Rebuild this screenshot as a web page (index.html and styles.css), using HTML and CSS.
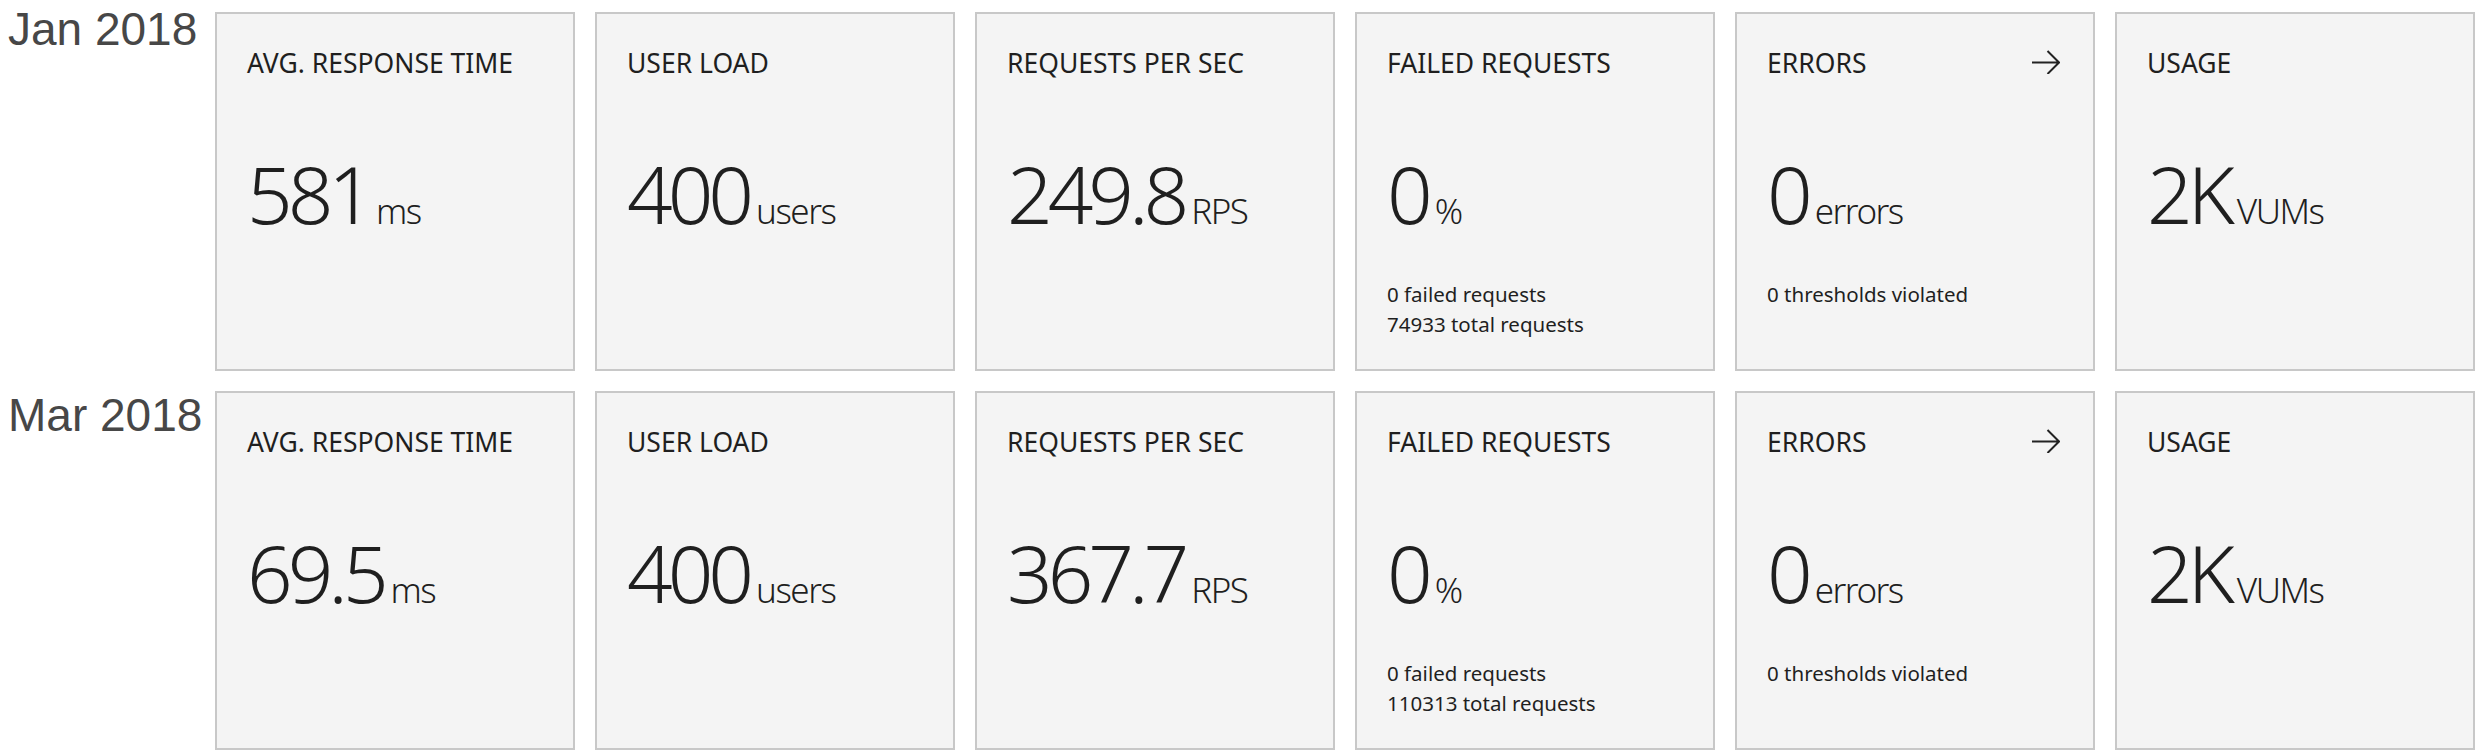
FILE: index.html
```html
<!DOCTYPE html>
<html>
<head>
<meta charset="utf-8">
<link rel="stylesheet" href="styles.css">
</head>
<body>
<div class="page">
  <section class="row">
    <div class="label label-first">Jan 2018</div>
    <div class="cards">
      <div class="card"><div class="head"><span class="title">AVG. RESPONSE TIME</span></div><div class="value"><span class="num">581</span><span class="unit">ms</span></div></div>
      <div class="card"><div class="head"><span class="title">USER LOAD</span></div><div class="value"><span class="num">400</span><span class="unit">users</span></div></div>
      <div class="card"><div class="head"><span class="title">REQUESTS PER SEC</span></div><div class="value"><span class="num">249.8</span><span class="unit">RPS</span></div></div>
      <div class="card"><div class="head"><span class="title">FAILED REQUESTS</span></div><div class="value"><span class="num">0</span><span class="unit">%</span></div><div class="sub"><div>0 failed requests</div><div>74933 total requests</div></div></div>
      <div class="card"><div class="head"><span class="title">ERRORS</span><svg class="arrow" width="28" height="24" viewBox="0 0 28 24"><path d="M0 12.5H27M15.5 1L27 12.5L15.5 24" fill="none" stroke="#222" stroke-width="2"/></svg></div><div class="value"><span class="num">0</span><span class="unit">errors</span></div><div class="sub"><div>0 thresholds violated</div></div></div>
      <div class="card"><div class="head"><span class="title">USAGE</span></div><div class="value"><span class="num">2K</span><span class="unit">VUMs</span></div></div>
    </div>
  </section>
  <section class="row">
    <div class="label label-second">Mar 2018</div>
    <div class="cards">
      <div class="card"><div class="head"><span class="title">AVG. RESPONSE TIME</span></div><div class="value"><span class="num">69.5</span><span class="unit">ms</span></div></div>
      <div class="card"><div class="head"><span class="title">USER LOAD</span></div><div class="value"><span class="num">400</span><span class="unit">users</span></div></div>
      <div class="card"><div class="head"><span class="title">REQUESTS PER SEC</span></div><div class="value"><span class="num">367.7</span><span class="unit">RPS</span></div></div>
      <div class="card"><div class="head"><span class="title">FAILED REQUESTS</span></div><div class="value"><span class="num">0</span><span class="unit">%</span></div><div class="sub"><div>0 failed requests</div><div>110313 total requests</div></div></div>
      <div class="card"><div class="head"><span class="title">ERRORS</span><svg class="arrow" width="28" height="24" viewBox="0 0 28 24"><path d="M0 12.5H27M15.5 1L27 12.5L15.5 24" fill="none" stroke="#222" stroke-width="2"/></svg></div><div class="value"><span class="num">0</span><span class="unit">errors</span></div><div class="sub"><div>0 thresholds violated</div></div></div>
      <div class="card"><div class="head"><span class="title">USAGE</span></div><div class="value"><span class="num">2K</span><span class="unit">VUMs</span></div></div>
    </div>
  </section>
</div>
</body>
</html>
```
FILE: styles.css
```css
html, body {
  margin: 0;
  padding: 0;
  background: #ffffff;
}
.page {
  padding: 12px 0 0 8px;
  display: flex;
  flex-direction: column;
  gap: 20px;
}
.row {
  display: flex;
  align-items: flex-start;
}
.label {
  width: 207px;
  flex: none;
  font-family: "Liberation Sans", Arial, sans-serif;
  font-size: 46px;
  line-height: 52px;
  color: #474747;
}
.label-first { margin-top: -9px; }
.label-second { margin-top: -2px; }
.cards {
  display: grid;
  grid-template-columns: repeat(6, 360px);
  gap: 20px;
}
.card {
  box-sizing: border-box;
  width: 360px;
  height: 359px;
  background: #f4f4f4;
  border: 2px solid #c8c8c8;
  padding: 31px 30px 0 30px;
  font-family: "Noto Sans", "Open Sans", sans-serif;
  color: #1f1f1f;
}
.head {
  display: flex;
  justify-content: space-between;
  align-items: center;
  height: 36px;
}
.title {
  font-size: 26.5px;
  line-height: 36px;
  font-weight: 400;
  white-space: nowrap;
}
.arrow {
  margin-right: 3px;
  margin-top: -2px;
}
.value {
  margin-top: 67px;
  height: 90px;
  line-height: 90px;
  white-space: nowrap;
}
.num {
  font-size: 80px;
  font-weight: 300;
  letter-spacing: -5px;
}
.unit {
  font-size: 35px;
  font-weight: 300;
  letter-spacing: -1.5px;
  margin-left: 7px;
}
.sub {
  margin-top: 41px;
  font-size: 20.5px;
  line-height: 30px;
  font-weight: 400;
}
```
